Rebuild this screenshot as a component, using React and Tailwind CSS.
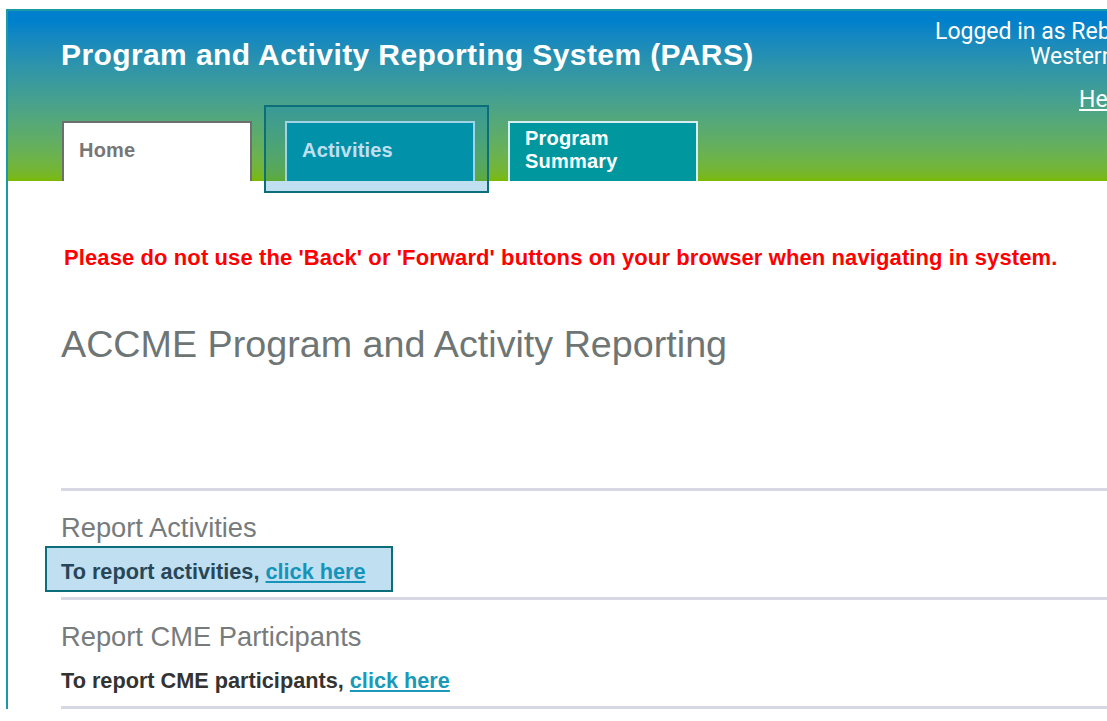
import React from 'react';

const tabs = [
  { label: ['Home'], active: true },
  { label: ['Activities'], marked: true },
  { label: ['Program', 'Summary'] },
];

function Tab({ label, active, marked }) {
  return (
    <div className="relative">
      <div
        className={
          active
            ? 'flex h-[60px] w-[190px] items-center border-2 border-b-0 border-[#6e6e6e] bg-white pb-[4px] pl-[15px] text-[#777]'
            : 'flex h-[60px] w-[190px] items-center border-2 border-b-0 border-[#d6eef2] bg-[#00979f] pb-[4px] pl-[15px] text-white'
        }
      >
        <div className="text-[20px] font-bold leading-[23px] tracking-[0.2px]">
          {label.map((l) => (
            <div key={l}>{l}</div>
          ))}
        </div>
      </div>
      {/* highlight marker around the tab */}
      {marked && (
        <div className="pointer-events-none absolute -left-[21px] -right-[14px] -top-[16px] -bottom-[12px] border-2 border-[#0b6e78] bg-[#037fc3]/25" />
      )}
    </div>
  );
}

function Section({ title, lead, marked }) {
  return (
    <div>
      <div className="h-[3px] bg-[#d6d9e3]" />
      <h3 className="mt-[21px] text-[27.3px] leading-[32px] text-[#777b7b]">{title}</h3>
      <p className="relative mt-[15px] mb-[12px] text-[21.7px] font-bold leading-[26px] text-[#333]">
        {lead}{' '}
        <a href="#" className="text-[#1a9ab8] underline">click here</a>
        {marked && (
          <span className="pointer-events-none absolute -left-[16px] top-[-13px] h-[46px] w-[348px] border-2 border-[#0b6e78] bg-[#037fc3]/25" />
        )}
      </p>
    </div>
  );
}

export default function App() {
  return (
    <div className="h-[721px] w-full overflow-hidden bg-white font-['Liberation_Sans',Arial,sans-serif]">
      <div className="ml-[6px] mt-[9px] w-[1300px] border-l-2 border-t-2 border-[#1b9aa6]">
        {/* header band */}
        <div className="flex h-[170px] flex-col bg-linear-to-b from-[#0080cc] from-[6%] to-[#7bb900]">
          <div className="flex flex-1">
            <h1 className="w-[927px] pl-[53px] pt-[27px] text-[30px] font-bold leading-[34px] tracking-[0.4px] text-white">
              Program and Activity Reporting System (PARS)
            </h1>
            <div className="pt-[8px] font-['Roboto',sans-serif] text-[23px] leading-[25px] text-white">
              <div className="whitespace-nowrap">Logged in as Rebecca Morgan</div>
              <div className="whitespace-nowrap pl-[95px]">Western Medical Center</div>
              <a href="#" className="mt-[18px] block pl-[144px] underline">Help</a>
            </div>
          </div>
          <div className="flex gap-[33px] pl-[54px]">
            {tabs.map((t) => (
              <Tab key={t.label[0]} {...t} />
            ))}
          </div>
        </div>

        <div className="pl-[53px]">
          <p className="pt-[64px] pl-[3px] text-[22px] font-bold leading-[26px] tracking-[0.1px] text-[#ff0000]">
            Please do not use the 'Back' or 'Forward' buttons on your browser when navigating in system.
          </p>
          <h2 className="mt-[51px] text-[37.7px] leading-[44px] text-[#6e7575]">
            ACCME Program and Activity Reporting
          </h2>
          <div className="mt-[122px]">
            <Section title="Report Activities" lead="To report activities," marked />
            <Section title="Report CME Participants" lead="To report CME participants," />
            <div className="h-[3px] bg-[#d6d9e3]" />
          </div>
        </div>
      </div>
    </div>
  );
}
